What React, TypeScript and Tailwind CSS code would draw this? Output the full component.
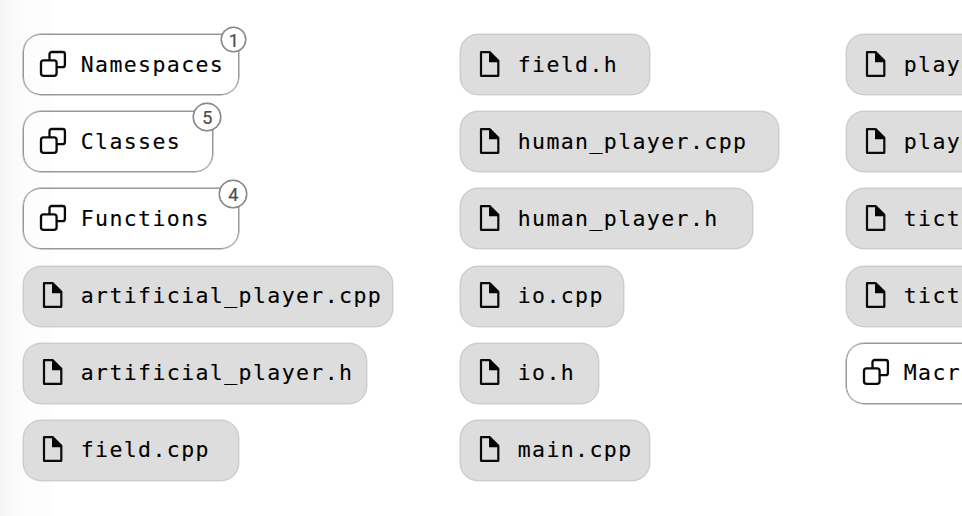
type Item = { label: string; width: string; kind: 'group' | 'file'; badge?: string; badgeClass?: string };

const columns: { width: string; items: Item[] }[] = [
  {
    width: 'w-[437px]',
    items: [
      { label: 'Namespaces', width: 'w-[216px]', kind: 'group', badge: '1', badgeClass: 'size-[25px] -top-[8px] -right-[8px]' },
      { label: 'Classes', width: 'w-[190px]', kind: 'group', badge: '5', badgeClass: 'size-[28px] -top-[9px] -right-[9px]' },
      { label: 'Functions', width: 'w-[216px]', kind: 'group', badge: '4', badgeClass: 'size-[28px] -top-[9px] -right-[9px]' },
      { label: 'artificial_player.cpp', width: 'w-[370px]', kind: 'file' },
      { label: 'artificial_player.h', width: 'w-[344px]', kind: 'file' },
      { label: 'field.cpp', width: 'w-[216px]', kind: 'file' },
    ],
  },
  {
    width: 'w-[386px]',
    items: [
      { label: 'field.h', width: 'w-[190px]', kind: 'file' },
      { label: 'human_player.cpp', width: 'w-[319px]', kind: 'file' },
      { label: 'human_player.h', width: 'w-[293px]', kind: 'file' },
      { label: 'io.cpp', width: 'w-[164px]', kind: 'file' },
      { label: 'io.h', width: 'w-[139px]', kind: 'file' },
      { label: 'main.cpp', width: 'w-[190px]', kind: 'file' },
    ],
  },
  {
    width: 'w-[300px]',
    items: [
      { label: 'player.cpp', width: 'w-[242px]', kind: 'file' },
      { label: 'player.h', width: 'w-[216px]', kind: 'file' },
      { label: 'tictactoe.cpp', width: 'w-[280px]', kind: 'file' },
      { label: 'tictactoe.h', width: 'w-[254px]', kind: 'file' },
      { label: 'Macros', width: 'w-[190px]', kind: 'group' },
    ],
  },
];

function GroupIcon() {
  return (
    <svg className="-mt-[4px] h-[30px] w-[30px] shrink-0" viewBox="0 0 30 30" fill="none" stroke="#0a0a0a" strokeWidth="2.3">
      <path d="M11.5 12V6.3a2.3 2.3 0 0 1 2.3-2.3h10.8a2.3 2.3 0 0 1 2.3 2.3v10.6a2.3 2.3 0 0 1-2.3 2.3H19" />
      <rect x="3" y="12.4" width="15.6" height="15.4" rx="2.6" />
    </svg>
  );
}

function FileIcon() {
  return (
    <svg className="-mt-[4px] h-[30px] w-[30px] shrink-0" viewBox="0 0 30 30">
      <path d="M6 4.2h8.8l8.5 8.6V27.8H6z" fill="none" stroke="#0a0a0a" strokeWidth="2.2" strokeLinejoin="round" />
      <path d="M14 3.7h1l8.4 8.8v1.7H14z" fill="#050505" />
    </svg>
  );
}

function Node({ item }: { item: Item }) {
  const tone =
    item.kind === 'group'
      ? 'border-[#989898] shadow-[0_0_0_0.5px_#989898]'
      : 'border-[#cccccc] bg-[#dddddd] shadow-[0_0_0_0.5px_#d4d4d4]';
  return (
    <div className={`relative flex h-[61px] shrink-0 items-center rounded-[18px] border pl-[14px] ${tone} ${item.width}`}>
      {item.kind === 'group' ? <GroupIcon /> : <FileIcon />}
      <span className="ml-[12.3px] whitespace-pre font-['DejaVu_Sans_Mono',monospace] text-[21.5px] leading-[30px] tracking-[1.41px] text-black [-webkit-text-stroke:0.12px_black]">
        {item.label}
      </span>
      {item.badge && (
        <span className={`absolute flex items-center justify-center rounded-full border border-[#808080] bg-white pt-[2px] font-[Roboto,sans-serif] text-[18px] leading-none text-[#4c4c4c] shadow-[0_0_0_0.5px_#808080] [-webkit-text-stroke:0.2px_#4c4c4c] ${item.badgeClass}`}>
          {item.badge}
        </span>
      )}
    </div>
  );
}

export default function App() {
  return (
    <div className="h-[516px] w-[962px] overflow-hidden bg-white bg-[linear-gradient(to_right,#f6f6f6_0px,#fdfdfd_28px,#fdfdfd_52px,#ffffff_54px)]">
      <div className="flex w-max pl-[23.4px] pt-[34px]">
        {columns.map((column, i) => (
          <div key={i} className={`flex shrink-0 flex-col gap-[16.2px] ${column.width}`}>
            {column.items.map((item) => (
              <Node key={item.label} item={item} />
            ))}
          </div>
        ))}
      </div>
    </div>
  );
}
